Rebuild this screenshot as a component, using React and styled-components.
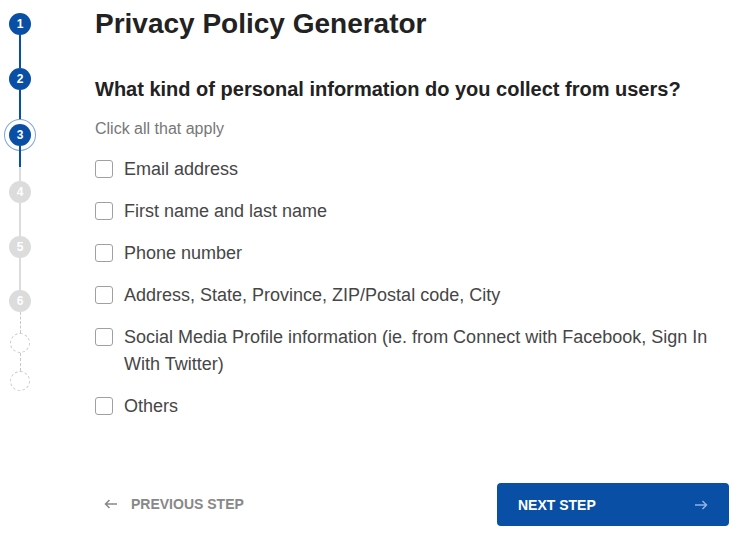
import React, { useState } from 'react'
import styled, { createGlobalStyle } from 'styled-components'

const GlobalStyle = createGlobalStyle`
  html, body {
    margin: 0;
    padding: 0;
    background: #fff;
    font-family: "Liberation Sans", Arial, sans-serif;
  }
`

const Page = styled.div`
  display: flex;
  width: 733px;
  height: 537px;
  overflow: hidden;
`

const Stepper = styled.div`
  display: flex;
  flex-direction: column;
  align-items: center;
  width: 40px;
  padding-top: 13px;
  box-sizing: border-box;
`

const Dot = styled.div`
  width: ${p => (p.$empty ? 20 : 22)}px;
  height: ${p => (p.$empty ? 20 : 22)}px;
  border-radius: 50%;
  box-sizing: border-box;
  display: flex;
  align-items: center;
  justify-content: center;
  font-size: 12px;
  font-weight: bold;
  color: #fff;
  background: ${p => (p.$empty ? 'transparent' : p.$done ? '#0a4fa6' : '#dcdcdc')};
  border: ${p => (p.$empty ? '1px dashed #c8c8c8' : 'none')};
  box-shadow: ${p => (p.$current ? '0 0 0 4px #fff, 0 0 0 5px #7ea6d8' : 'none')};
`

const Line = styled.div`
  width: 0;
  height: ${p => p.$h}px;
  border-left: ${p => (p.$dashed ? '1px dashed #c8c8c8' : '2px solid #dcdcdc')};
  ${p => p.$fill && `border-image: linear-gradient(to bottom, #0a4fa6 ${p.$fill}%, #dcdcdc ${p.$fill}%) 1;`}
`

const Main = styled.div`
  flex: 1;
  padding-left: 55px;
  padding-right: 4px;
  display: flex;
  flex-direction: column;
`

const Title = styled.h1`
  margin: 8px 0 0;
  font-size: 28px;
  line-height: 32px;
  font-weight: bold;
  color: #222;
`

const Question = styled.h2`
  margin: 36px 0 0;
  font-size: 20px;
  line-height: 26px;
  font-weight: bold;
  color: #222;
`

const Hint = styled.div`
  margin-top: 17px;
  font-size: 16px;
  line-height: 20px;
  color: #777;
`

const Options = styled.div`
  display: flex;
  flex-direction: column;
  gap: 15px;
  margin-top: 17px;
`

const Option = styled.label`
  display: flex;
  align-items: flex-start;
  gap: 11px;
  font-size: 18px;
  line-height: 27px;
  color: #464646;
  cursor: pointer;
`

const Box = styled.span`
  flex: none;
  width: 18px;
  height: 18px;
  margin-top: 4px;
  box-sizing: border-box;
  border: 1px solid ${p => (p.$on ? '#0a4fa6' : '#a0a0a0')};
  border-radius: 3px;
  background: ${p => (p.$on ? '#0a4fa6' : '#fff')};
`

const Footer = styled.div`
  margin-top: auto;
  margin-bottom: 11px;
  display: flex;
  align-items: center;
  justify-content: space-between;
`

const PrevButton = styled.button`
  display: flex;
  align-items: center;
  gap: 13px;
  padding: 0 0 2px 9px;
  background: none;
  border: 0;
  font-family: inherit;
  font-size: 14px;
  font-weight: bold;
  color: #888;
  cursor: pointer;
`

const NextButton = styled.button`
  width: 232px;
  height: 43px;
  display: flex;
  align-items: center;
  justify-content: space-between;
  padding: 0 21px;
  box-sizing: border-box;
  background: #0a4fa6;
  border: 0;
  border-radius: 4px;
  font-family: inherit;
  font-size: 14px;
  font-weight: bold;
  color: #fff;
  cursor: pointer;
`

const Arrow = ({ color, left }) => (
  <svg width="14" height="10" viewBox="0 0 14 10" fill="none" stroke={color} strokeWidth="1.5">
    {left ? <path d="M13 5H1.5M5.5 1L1.5 5l4 4" /> : <path d="M1 5h11.5M8.5 1l4 4-4 4" />}
  </svg>
)

const options = [
  'Email address',
  'First name and last name',
  'Phone number',
  'Address, State, Province, ZIP/Postal code, City',
  'Social Media Profile information (ie. from Connect with Facebook, Sign In With Twitter)',
  'Others',
]

export default function App() {
  const [checked, setChecked] = useState({})

  return (
    <>
      <GlobalStyle />
      <Page>
        <Stepper>
          <Dot $done>1</Dot>
          <Line $h={33} $fill={100} />
          <Dot $done>2</Dot>
          <Line $h={34} $fill={100} />
          <Dot $done $current>3</Dot>
          <Line $h={35} $fill={60} />
          <Dot>4</Dot>
          <Line $h={33} />
          <Dot>5</Dot>
          <Line $h={32} />
          <Dot>6</Dot>
          <Line $h={21} $dashed />
          <Dot $empty />
          <Line $h={18} $dashed />
          <Dot $empty />
        </Stepper>
        <Main>
          <Title>Privacy Policy Generator</Title>
          <Question>What kind of personal information do you collect from users?</Question>
          <Hint>Click all that apply</Hint>
          <Options>
            {options.map((o, i) => (
              <Option key={i} onClick={() => setChecked({ ...checked, [i]: !checked[i] })}>
                <Box $on={checked[i]} />
                <span>{o}</span>
              </Option>
            ))}
          </Options>
          <Footer>
            <PrevButton>
              <Arrow color="#888" left />
              PREVIOUS STEP
            </PrevButton>
            <NextButton>
              NEXT STEP
              <Arrow color="#8fb3e3" />
            </NextButton>
          </Footer>
        </Main>
      </Page>
    </>
  )
}
